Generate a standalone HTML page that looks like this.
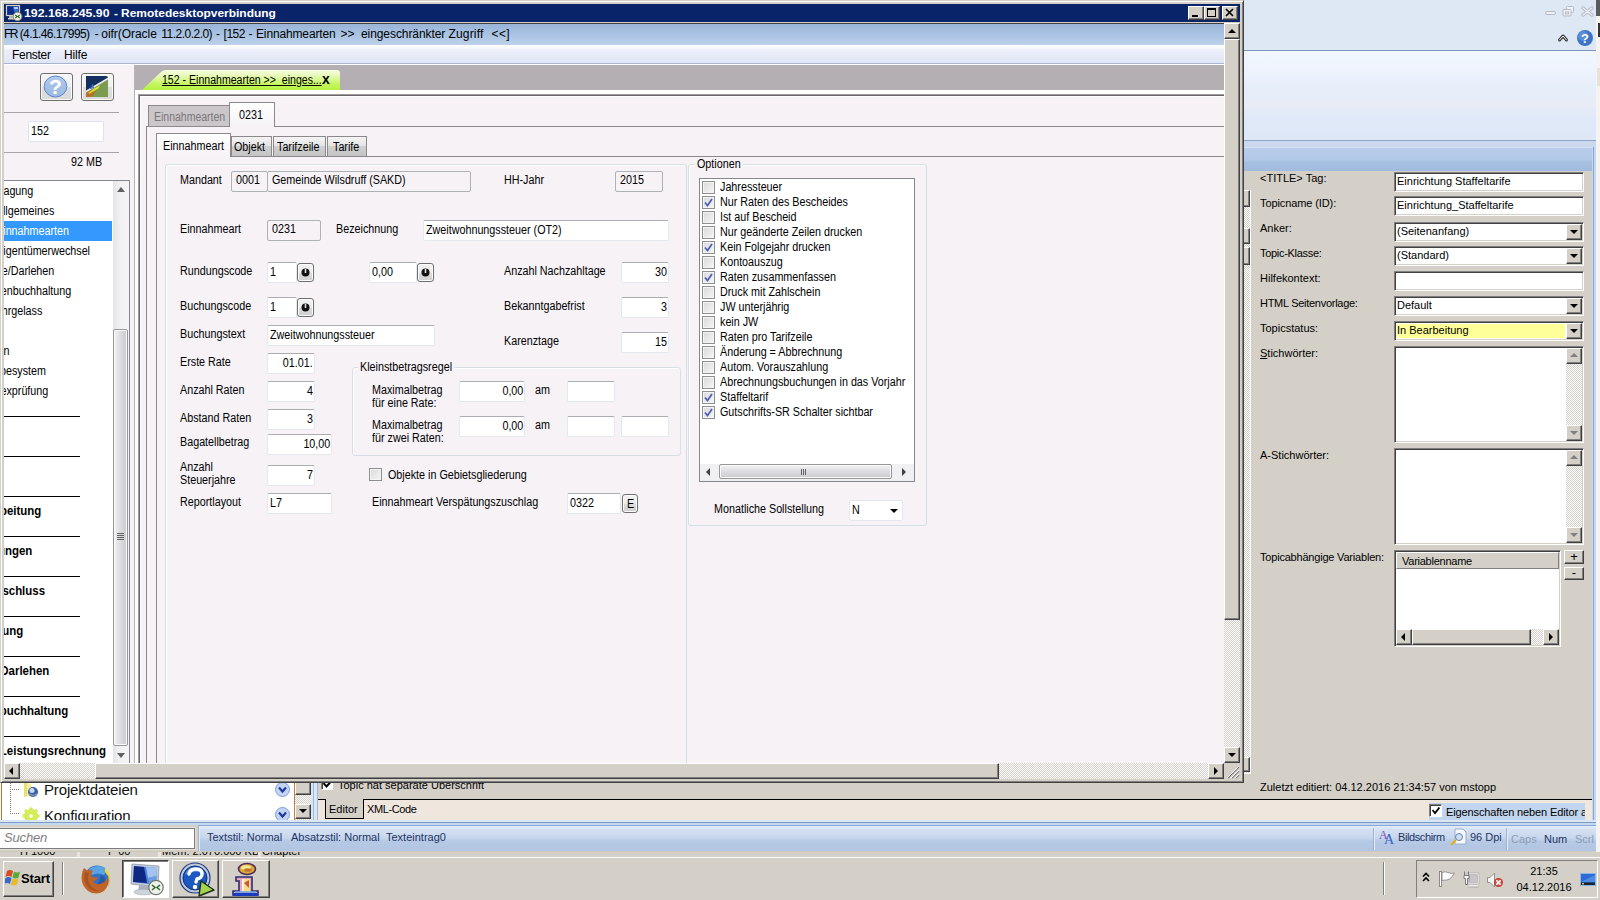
<!DOCTYPE html>
<html><head><meta charset="utf-8">
<style>
*{box-sizing:border-box;margin:0;padding:0}
html,body{width:1600px;height:900px;overflow:hidden;background:#d4d0c8;font-family:"Liberation Sans",sans-serif;font-size:11px;color:#000}
.a{position:absolute}
.t{position:absolute;white-space:nowrap;line-height:14px;font-size:11px;letter-spacing:-0.15px}
.dith{background-color:#eae8e4;background-image:conic-gradient(#fff 25%,#d4d0c8 0 50%,#fff 0 75%,#d4d0c8 0);background-size:2px 2px}
.b3{position:absolute;background:#d4d0c8;border:1px solid;border-color:#fff #404040 #404040 #fff;box-shadow:inset -1px -1px 0 #808080}
.sunk{position:absolute;background:#fff;border:1px solid;border-color:#808080 #fff #fff #808080;box-shadow:inset 1px 1px 0 #404040,inset -1px -1px 0 #d4d0c8}
.inp{position:absolute;background:#fff;border:1px solid #e3e9ef;border-top-color:#abadb3;border-radius:2px;height:21px;font-size:11px;line-height:19px;padding:0 1px 0 2px;white-space:nowrap;overflow:hidden;letter-spacing:-0.15px}
.inpd{position:absolute;background:#f6f2f6;border:1px solid #adb2b5;height:21px;font-size:11px;line-height:16px;padding:0 4px;white-space:nowrap;border-radius:2px;overflow:hidden;letter-spacing:-0.15px}
.r{text-align:right}
.f{margin-top:1px;font-size:12.5px;line-height:13px;letter-spacing:0;transform:scaleX(.86);transform-origin:0 0}
.fr{transform-origin:100% 0}
.inp>span,.inpd>span{display:inline-block;font-size:12.5px;letter-spacing:0;transform:scaleX(.86);transform-origin:0 50%}
.inp.r>span{transform-origin:100% 50%}
.hl{position:absolute;height:1px}
.vl{position:absolute;width:1px}
.cb{position:absolute;width:13px;height:13px;border:1px solid #8e8f8f;background:linear-gradient(135deg,#d9d9d9,#f6f6f6);box-shadow:inset 0 0 0 1px #f4f4f4}
.hmt{position:absolute;white-space:nowrap;font-size:11px;line-height:14px}
</style></head><body>

<!-- HM background -->
<div class="a" style="left:1243px;top:0px;width:357px;height:853px;background:#dee8f5;"></div>
<div class="a" style="left:1243px;top:50px;width:353px;height:1px;background:#7f96ba;"></div>
<div class="a" style="left:1243px;top:51px;width:353px;height:89px;background:linear-gradient(#f1f7fe 0,#eef3fd 22%,#e6eefa 40%,#e7ebf6 62%,#dfe9f8 75%,#dde7f7 100%);"></div>
<div class="a" style="left:1243px;top:140px;width:353px;height:1px;background:#8fa6c8;"></div>
<div class="a" style="left:1243px;top:141px;width:353px;height:6px;background:#cbd9ee;"></div>
<div class="a" style="left:1596px;top:0px;width:4px;height:853px;background:#f4f3f1;"></div>
<div class="a" style="left:1596px;top:0px;width:4px;height:16px;background:#5a5a5a;"></div>
<div class="a" style="left:1598px;top:23px;width:2px;height:14px;background:#333;"></div>
<div class="a" style="left:1597px;top:68px;width:3px;height:18px;background:#e6e2da;"></div>
<svg class="a" style="left:1540px;top:0" width="60" height="50" viewBox="0 0 60 50">
<rect x="5.500" y="11.500" width="10" height="3" rx="1.500" fill="#eef2f8" stroke="#b4b9c4"/>
<rect x="26.500" y="6.500" width="7" height="6" rx="1" fill="#eef2f8" stroke="#b4b9c4"/>
<rect x="23" y="9.500" width="8" height="6.500" rx="1" fill="#eef2f8" stroke="#b4b9c4"/>
<rect x="25.500" y="12" width="3" height="2" fill="none" stroke="#b4b9c4"/>
<path d="M43 8 L52 15 M52 8 L43 15" stroke="#b4b9c4" stroke-width="3.400" stroke-linecap="round"/>
<path d="M43 8 L52 15 M52 8 L43 15" stroke="#eef2f8" stroke-width="1.400" stroke-linecap="round"/>
<path d="M19.500 40 L23 36 L26.500 40" fill="none" stroke="#333" stroke-width="3" stroke-linejoin="round" stroke-linecap="round"/>
<path d="M19.500 40 L23 36 L26.500 40" fill="none" stroke="#fff" stroke-width="1" stroke-linejoin="round" stroke-linecap="round"/>
<circle cx="45" cy="38" r="8" fill="#3f73c6"/>
<circle cx="43" cy="36" r="5" fill="#6b97d9" opacity=".7"/>
<text x="45" y="43" font-family="Liberation Sans" font-weight="bold" font-size="13" fill="#fff" text-anchor="middle">?</text>
</svg>
<div class="a" style="left:1244px;top:147px;width:349px;height:24px;background:linear-gradient(#b8cdea 0,#b1c8e7 50%,#a6c0e1 62%,#a0bbde 100%);border-top:1px solid #d5e2f3;border-right:1px solid #8ea9cf"></div>
<div class="a" style="left:1244px;top:171px;width:348px;height:628px;background:#d4d0c8;"></div>
<div class="a" style="left:1592px;top:147px;width:4px;height:706px;background:#c6d8ef;"></div>
<div class="a" style="left:1593px;top:147px;width:1px;height:680px;background:#88a6cf;"></div>
<div class="a dith" style="left:1244px;top:190px;width:6px;height:583px"></div>
<div class="a" style="left:1250px;top:190px;width:1px;height:584px;background:#fff;"></div>
<div class="a" style="left:1244px;top:773px;width:7px;height:1px;background:#fff;"></div>
<div class="a" style="left:1244px;top:190px;width:6px;height:17px;background:#d4d0c8;border:1px solid;border-color:#fff #404040 #404040 #d4d0c8;border-left:none;box-shadow:inset -1px -1px 0 #808080"></div>
<div class="a" style="left:1244px;top:228px;width:6px;height:16px;background:#d4d0c8;border:1px solid;border-color:#fff #404040 #404040 #d4d0c8;border-left:none;box-shadow:inset -1px -1px 0 #808080"></div>
<div class="a" style="left:1244px;top:247px;width:6px;height:18px;background:#d4d0c8;border:1px solid;border-color:#fff #404040 #404040 #d4d0c8;border-left:none;box-shadow:inset -1px -1px 0 #808080"></div>
<div class="a" style="left:1244px;top:757px;width:6px;height:15px;background:#d4d0c8;border:1px solid;border-color:#fff #404040 #404040 #d4d0c8;border-left:none;box-shadow:inset -1px -1px 0 #808080"></div>
<div class="hmt" style="left:1260px;top:171px;">&lt;TITLE&gt; Tag:</div>
<div class="hmt" style="left:1260px;top:196px;"><span style="letter-spacing:-0.1px">Topicname (ID):</span></div>
<div class="hmt" style="left:1260px;top:221px;">Anker:</div>
<div class="hmt" style="left:1260px;top:246px;"><span style="letter-spacing:-0.3px">Topic-Klasse:</span></div>
<div class="hmt" style="left:1260px;top:271px;">Hilfekontext:</div>
<div class="hmt" style="left:1260px;top:296px;"><span style="letter-spacing:-0.28px">HTML Seitenvorlage:</span></div>
<div class="hmt" style="left:1260px;top:321px;">Topicstatus:</div>
<div class="hmt" style="left:1260px;top:346px;"><u>S</u>tichwörter:</div>
<div class="hmt" style="left:1260px;top:448px;">A-Stichwörter:</div>
<div class="hmt" style="left:1260px;top:550px;"><span style="letter-spacing:-0.2px">Topicabhängige Variablen:</span></div>
<div class="sunk" style="left:1394px;top:172px;width:190px;height:20px;"></div>
<div class="hmt" style="left:1397px;top:174px;">Einrichtung Staffeltarife</div>
<div class="sunk" style="left:1394px;top:196px;width:190px;height:20px;"></div>
<div class="hmt" style="left:1397px;top:198px;">Einrichtung_Staffeltarife</div>
<div class="sunk" style="left:1394px;top:222px;width:190px;height:20px;"></div>
<div class="hmt" style="left:1397px;top:224px;">(Seitenanfang)</div>
<div class="b3" style="left:1566px;top:224px;width:16px;height:16px"></div>
<div class="a" style="left:1570px;top:230px;border:4px solid transparent;border-top-color:#000;border-bottom:none;width:0;height:0"></div>
<div class="sunk" style="left:1394px;top:246px;width:190px;height:20px;"></div>
<div class="hmt" style="left:1397px;top:248px;">(Standard)</div>
<div class="b3" style="left:1566px;top:248px;width:16px;height:16px"></div>
<div class="a" style="left:1570px;top:254px;border:4px solid transparent;border-top-color:#000;border-bottom:none;width:0;height:0"></div>
<div class="sunk" style="left:1394px;top:271px;width:190px;height:20px;"></div>
<div class="sunk" style="left:1394px;top:296px;width:190px;height:20px;"></div>
<div class="hmt" style="left:1397px;top:298px;">Default</div>
<div class="b3" style="left:1566px;top:298px;width:16px;height:16px"></div>
<div class="a" style="left:1570px;top:304px;border:4px solid transparent;border-top-color:#000;border-bottom:none;width:0;height:0"></div>
<div class="sunk" style="left:1394px;top:321px;width:190px;height:20px;"></div>
<div class="a" style="left:1397px;top:324px;width:168px;height:14px;background:#ffff99;"></div>
<div class="hmt" style="left:1397px;top:323px;">In Bearbeitung</div>
<div class="b3" style="left:1566px;top:323px;width:16px;height:16px"></div>
<div class="a" style="left:1570px;top:329px;border:4px solid transparent;border-top-color:#000;border-bottom:none;width:0;height:0"></div>
<div class="sunk" style="left:1394px;top:346px;width:190px;height:97px;"></div>
<div class="a dith" style="left:1566px;top:348px;width:16px;height:93px"></div>
<div class="b3" style="left:1566px;top:348px;width:16px;height:16px"></div>
<div class="a" style="left:1570px;top:353px;border:4px solid transparent;border-bottom-color:#808080;border-top:none;width:0;height:0"></div>
<div class="b3" style="left:1566px;top:425px;width:16px;height:16px"></div>
<div class="a" style="left:1570px;top:431px;border:4px solid transparent;border-top-color:#808080;border-bottom:none;width:0;height:0"></div>
<div class="sunk" style="left:1394px;top:448px;width:190px;height:97px;"></div>
<div class="a dith" style="left:1566px;top:450px;width:16px;height:93px"></div>
<div class="b3" style="left:1566px;top:450px;width:16px;height:16px"></div>
<div class="a" style="left:1570px;top:455px;border:4px solid transparent;border-bottom-color:#808080;border-top:none;width:0;height:0"></div>
<div class="b3" style="left:1566px;top:527px;width:16px;height:16px"></div>
<div class="a" style="left:1570px;top:533px;border:4px solid transparent;border-top-color:#808080;border-bottom:none;width:0;height:0"></div>
<div class="sunk" style="left:1394px;top:550px;width:167px;height:97px;"></div>
<div class="a" style="left:1396px;top:552px;width:163px;height:17px;background:#d4d0c8;border:1px solid;border-color:#fff #808080 #808080 #fff"></div>
<div class="hmt" style="left:1402px;top:554px;letter-spacing:-0.25px">Variablenname</div>
<div class="a dith" style="left:1396px;top:629px;width:163px;height:16px"></div>
<div class="b3" style="left:1396px;top:629px;width:16px;height:16px"></div>
<div class="a" style="left:1401px;top:633px;border:4px solid transparent;border-right-color:#000;border-left:none;width:0;height:0"></div>
<div class="b3" style="left:1543px;top:629px;width:16px;height:16px"></div>
<div class="a" style="left:1549px;top:633px;border:4px solid transparent;border-left-color:#000;border-right:none;width:0;height:0"></div>
<div class="b3" style="left:1412px;top:629px;width:119px;height:16px"></div>
<div class="b3" style="left:1564px;top:550px;width:20px;height:14px;text-align:center;line-height:11px;font-size:13px">+</div>
<div class="b3" style="left:1564px;top:567px;width:20px;height:13px;text-align:center;line-height:9px;font-size:13px">-</div>
<div class="hmt" style="left:1260px;top:780px;">Zuletzt editiert: 04.12.2016 21:34:57 von mstopp</div>
<!-- RDP window frame -->
<div class="a" style="left:0px;top:0px;width:1244px;height:783px;background:#d4d0c8;border:1px solid;border-color:#d4d0c8 #404040 #404040 #d4d0c8;box-shadow:inset 1px 1px 0 #fff,inset -1px -1px 0 #808080"></div>
<div class="a" style="left:4px;top:4px;width:1236px;height:18px;background:#0a246a;"></div>
<svg class="a" style="left:5px;top:4px" width="18" height="18" viewBox="0 0 18 18">
<rect x="1.500" y="1.500" width="13" height="10" fill="#0c2c8c" stroke="#d4d0c0" stroke-width="1.200"/>
<path d="M7.500 2.500 h6 v5 l-4 1z" fill="#3c6cd0"/><path d="M9 3 h4 v2 h-4z" fill="#a8c8f8"/>
<rect x="4" y="12" width="5" height="2" fill="#b8b4a8"/><rect x="3" y="14" width="8" height="1.500" fill="#dcd8cc"/>
<circle cx="12.500" cy="12.500" r="4.300" fill="#f0f0e8" stroke="#8c8878" stroke-width="1"/>
<path d="M10.300 10.800 l1.700 1.700 l-1.700 1.700 M14.700 10.800 l-1.700 1.700 l1.700 1.700" stroke="#186018" stroke-width="1.100" fill="none"/>
</svg>
<div class="t" style="left:24.4px;top:6px;font-size:11px;letter-spacing:0;transform:scaleX(1.1183);transform-origin:0 0;font-weight:bold;color:#fff;line-height:15px">192.168.245.90</div>
<div class="t" style="left:114.2px;top:6px;font-size:11px;letter-spacing:0;transform:scaleX(1.0648);transform-origin:0 0;font-weight:bold;color:#fff;line-height:15px">-</div>
<div class="t" style="left:121px;top:6px;font-size:11px;letter-spacing:0;transform:scaleX(1.0878);transform-origin:0 0;font-weight:bold;color:#fff;line-height:15px">Remotedesktopverbindung</div>
<div class="b3" style="left:1188px;top:6px;width:16px;height:14px"></div>
<div class="b3" style="left:1204px;top:6px;width:16px;height:14px"></div>
<div class="b3" style="left:1222px;top:6px;width:16px;height:14px"></div>
<div class="a" style="left:1192px;top:15px;width:6px;height:2px;background:#000;"></div>
<div class="a" style="left:1207px;top:8px;width:9px;height:9px;border:1px solid #000;border-top-width:2px"></div>
<svg class="a" style="left:1225px;top:8px" width="10" height="9" viewBox="0 0 10 9"><path d="M1 1 L8 8 M8 1 L1 8" stroke="#000" stroke-width="1.600"/></svg>
<div class="a" id="client" style="left:4px;top:23px;width:1220px;height:740px;overflow:hidden;background:#f6f2f6">
<div class="a" style="left:0px;top:0px;width:1220px;height:1px;background:#404040;"></div>
<div class="a" style="left:0px;top:1px;width:1220px;height:21px;background:linear-gradient(#98b4d8,#a9c3e3 50%,#bdd1ea);"></div>
<div class="a" style="left:0px;top:22px;width:1220px;height:4px;background:linear-gradient(#fff,#f4f6fc);"></div>
<div class="a" style="left:0px;top:26px;width:1220px;height:15px;background:linear-gradient(#eef0fa,#dfe5f5);"></div>
<div class="a" style="left:0px;top:40px;width:1220px;height:1px;background:#a9b5d0;"></div>
<div class="a" style="left:0px;top:41px;width:1220px;height:1px;background:#fff;"></div>
<div class="t" style="left:0px;top:4px;font-size:12px;letter-spacing:-1.548px;">FR</div>
<div class="t" style="left:15.7px;top:4px;font-size:12px;letter-spacing:-0.590px;">(4.1.46.17995)</div>
<div class="t" style="left:90.7px;top:4px;font-size:12px;letter-spacing:-0.197px;">-</div>
<div class="t" style="left:97.3px;top:4px;font-size:12px;letter-spacing:-0.046px;">oifr(Oracle</div>
<div class="t" style="left:157.3px;top:4px;font-size:12px;letter-spacing:-0.517px;">11.2.0.2.0)</div>
<div class="t" style="left:212px;top:4px;font-size:12px;letter-spacing:0.003px;">-</div>
<div class="t" style="left:219.6px;top:4px;font-size:12px;letter-spacing:-0.489px;">[152</div>
<div class="t" style="left:244.5px;top:4px;font-size:12px;letter-spacing:0.503px;">-</div>
<div class="t" style="left:252px;top:4px;font-size:12px;letter-spacing:-0.145px;">Einnahmearten</div>
<div class="t" style="left:336.5px;top:4px;font-size:12px;letter-spacing:-0.008px;">&gt;&gt;</div>
<div class="t" style="left:357px;top:4px;font-size:12px;letter-spacing:-0.079px;">eingeschränkter</div>
<div class="t" style="left:444.4px;top:4px;font-size:12px;letter-spacing:0.187px;">Zugriff</div>
<div class="t" style="left:487.6px;top:4px;font-size:12px;letter-spacing:0.317px;">&lt;&lt;]</div>
<div class="t" style="left:8px;top:25px;font-size:12px;letter-spacing:-0.3px">Fenster</div>
<div class="t" style="left:60px;top:25px;font-size:12px">Hilfe</div>
<div class="a" style="left:130px;top:42px;width:1px;height:700px;background:#b8b4b8;"></div>
<div class="a" style="left:36px;top:50px;width:33px;height:28px;background:linear-gradient(#f6f6f6,#efefef 48%,#dedede 50%,#dadada);border:1px solid #70706a;border-radius:3px;box-shadow:inset 0 0 0 1px #fbfbfb"></div>
<div class="a" style="left:77px;top:50px;width:33px;height:28px;background:linear-gradient(#f6f6f6,#efefef 48%,#dedede 50%,#dadada);border:1px solid #70706a;border-radius:3px;box-shadow:inset 0 0 0 1px #fbfbfb"></div>
<svg class="a" style="left:39px;top:52px" width="25" height="23" viewBox="0 0 25 23">
<defs><linearGradient id="qg" x1="0" y1="0" x2="0" y2="1"><stop offset="0" stop-color="#b4cdee"/><stop offset=".5" stop-color="#a4c0e6"/><stop offset="1" stop-color="#9cbae2"/></linearGradient></defs>
<ellipse cx="12.500" cy="11.500" rx="11.300" ry="10.500" fill="url(#qg)" stroke="#5f86d4" stroke-width="1"/>
<text x="12.500" y="19" font-family="Liberation Sans" font-weight="bold" font-size="21" fill="#fff" text-anchor="middle">?</text></svg>
<svg class="a" style="left:82px;top:53px" width="22" height="21" viewBox="0 0 22 21">
<path d="M0 0 L20 0 Q22 0 22 2 L22 21 L0 21Z" fill="#15305e"/>
<path d="M0 21 L0 15.500 L22 2.500 L22 21 Z" fill="#7b9a52"/>
<path d="M0 21 L0 16 L11 10 L12 13 L9 16 L6 21 Z" fill="#b87030"/>
<path d="M0 14.500 L22 1.500 L22 3.500 L0 16.500 Z" fill="#ece8ec"/>
<path d="M3 13.500 l2.500 -2.500 l0.500 -3 l1.500 1 l0.500 3 z" fill="#3f78d0"/>
<path d="M2 17 l3 -2 l3 -2.500 l3 -1.500 l3 -1.500 l-1 2.500 l-3 2 l-3 1.500 l-3 2 z" fill="#c0f030"/>
</svg>
<div class="a" style="left:0px;top:89px;width:115px;height:1px;background:#a8a4a8;"></div>
<div class="a" style="left:0px;top:129px;width:115px;height:1px;background:#a8a4a8;"></div>
<div class="inp" style="left:24px;top:98px;width:76px;border-color:#dde3ee;border-radius:2px"><span>152</span></div>
<div class="t f" style="left:67px;top:132px;">92 MB</div>
<div class="a" style="left:0px;top:157px;width:126px;height:585px;background:#fff;border-top:1px solid #828790;border-right:1px solid #828790"></div>
<div class="a" style="left:0px;top:198px;width:108px;height:20px;background:#3399ff;"></div>
<div class="t f fr" style="left:-200px;width:229.3px;text-align:right;top:161px;">agung</div>
<div class="t f fr" style="left:-200px;width:250.3px;text-align:right;top:181px;">llgemeines</div>
<div class="t f fr" style="left:-200px;width:265px;text-align:right;top:201px;color:#fff">innahmearten</div>
<div class="t f fr" style="left:-200px;width:286px;text-align:right;top:221px;">igentümerwechsel</div>
<div class="t f fr" style="left:-200px;width:250.3px;text-align:right;top:241px;">e/Darlehen</div>
<div class="t f fr" style="left:-200px;width:267.3px;text-align:right;top:261px;">enbuchhaltung</div>
<div class="t f fr" style="left:-200px;width:238.3px;text-align:right;top:281px;">hrgelass</div>
<div class="t f fr" style="left:-200px;width:205.5px;text-align:right;top:321px;">en</div>
<div class="t f fr" style="left:-200px;width:242px;text-align:right;top:341px;">besystem</div>
<div class="t f fr" style="left:-200px;width:244.3px;text-align:right;top:361px;">exprüfung</div>
<div class="a" style="left:0px;top:393px;width:76px;height:1px;background:#000;"></div>
<div class="a" style="left:0px;top:433px;width:76px;height:1px;background:#000;"></div>
<div class="a" style="left:0px;top:473px;width:76px;height:1px;background:#000;"></div>
<div class="a" style="left:0px;top:513px;width:76px;height:1px;background:#000;"></div>
<div class="a" style="left:0px;top:553px;width:76px;height:1px;background:#000;"></div>
<div class="a" style="left:0px;top:593px;width:76px;height:1px;background:#000;"></div>
<div class="a" style="left:0px;top:633px;width:76px;height:1px;background:#000;"></div>
<div class="a" style="left:0px;top:673px;width:76px;height:1px;background:#000;"></div>
<div class="a" style="left:0px;top:713px;width:76px;height:1px;background:#000;"></div>
<div class="t f fr" style="left:-200px;width:237.3px;text-align:right;top:481px;font-weight:bold;transform:scaleX(.915)">rbeitung</div>
<div class="t f fr" style="left:-200px;width:228.3px;text-align:right;top:521px;font-weight:bold;transform:scaleX(.915)">ungen</div>
<div class="t f fr" style="left:-200px;width:241px;text-align:right;top:561px;font-weight:bold;transform:scaleX(.915)">bschluss</div>
<div class="t f fr" style="left:-200px;width:219.3px;text-align:right;top:601px;font-weight:bold;transform:scaleX(.915)">nung</div>
<div class="t f fr" style="left:-200px;width:245.3px;text-align:right;top:641px;font-weight:bold;transform:scaleX(.915)">/Darlehen</div>
<div class="t f fr" style="left:-200px;width:264.3px;text-align:right;top:681px;font-weight:bold;transform:scaleX(.915)">nbuchhaltung</div>
<div class="t f fr" style="left:-200px;width:302px;text-align:right;top:721px;font-weight:bold;transform:scaleX(.915)">Leistungsrechnung</div>
<div class="a" style="left:109px;top:158px;width:16px;height:582px;background:linear-gradient(90deg,#e4e4e6,#f0eff1 40%,#f5f4f6);"></div>
<div class="a" style="left:113px;top:164px;border:4px solid transparent;border-bottom:5px solid #606060;border-top:none;width:0;height:0"></div>
<div class="a" style="left:109px;top:306px;width:15px;height:417px;background:linear-gradient(90deg,#f2f2f4,#dcdce0 50%,#c9c9cf);border:1px solid #979797;border-radius:2px;box-shadow:inset 0 0 0 1px #fafafa"></div>
<div class="a" style="left:113px;top:510px;width:7px;height:1px;background:#606060;"></div>
<div class="a" style="left:113px;top:512px;width:7px;height:1px;background:#606060;"></div>
<div class="a" style="left:113px;top:514px;width:7px;height:1px;background:#606060;"></div>
<div class="a" style="left:113px;top:516px;width:7px;height:1px;background:#606060;"></div>
<div class="a" style="left:113px;top:730px;border:4px solid transparent;border-top:5px solid #606060;border-bottom:none;width:0;height:0"></div>
<div class="a" style="left:131px;top:42px;width:1089px;height:25px;background:#b3afb3;"></div>
<div class="a" style="left:131px;top:67px;width:1089px;height:4px;background:#fff;"></div>
<div class="a" style="left:131px;top:67px;width:3px;height:675px;background:#fff;"></div>
<div class="a" style="left:134px;top:71px;width:1086px;height:1px;background:#a09ca0;"></div>
<div class="a" style="left:135px;top:72px;width:1085px;height:1px;background:#6a666a;"></div>
<div class="a" style="left:136px;top:73px;width:1084px;height:1px;background:#fff;"></div>
<div class="a" style="left:134px;top:71px;width:1px;height:670px;background:#a09ca0;"></div>
<div class="a" style="left:135px;top:72px;width:1px;height:670px;background:#6a666a;"></div>
<div class="a" style="left:136px;top:73px;width:1px;height:670px;background:#fff;"></div>
<svg class="a" style="left:134px;top:46px" width="206" height="21" viewBox="0 0 206 21">
<defs><linearGradient id="gg" x1="0" y1="0" x2="0" y2="1"><stop offset="0" stop-color="#f8fde4"/><stop offset=".3" stop-color="#e6f9b4"/><stop offset=".7" stop-color="#c6f662"/><stop offset="1" stop-color="#b6f23e"/></linearGradient></defs>
<path d="M4 21 L23 3 Q25 1 28 1 L199 1 Q202 1 202 4 L202 21 Z" fill="url(#gg)"/>
</svg>
<div class="t f" style="left:158px;top:50px;text-decoration:underline;transform:scaleX(.845)">152 - Einnahmearten &gt;&gt;&nbsp; einges...</div>
<div class="t" style="left:318px;top:49px;font-weight:bold;font-size:14px;line-height:14px">x</div>
<div class="a" style="left:142px;top:103px;width:1078px;height:1px;background:#8c888c;"></div>
<div class="a" style="left:142px;top:103px;width:1px;height:640px;background:#8c888c;"></div>
<div class="a" style="left:144px;top:82px;width:82px;height:21px;background:#cac6ca;border:1px solid #8c888c;border-bottom:none"></div>
<div class="t f" style="left:150px;top:87px;color:#7a767a;transform:scaleX(.84)">Einnahmearten</div>
<div class="a" style="left:225px;top:79px;width:46px;height:25px;background:#fbf9fb;border:1px solid #8c888c;border-bottom:none;background:linear-gradient(#fff,#f6f2f6)"></div>
<div class="t f" style="left:235px;top:85px;">0231</div>
<div class="a" style="left:152px;top:133px;width:1068px;height:1px;background:#8c888c;"></div>
<div class="a" style="left:152px;top:133px;width:1px;height:610px;background:#8c888c;"></div>
<div class="a" style="left:227px;top:113px;width:41px;height:20px;background:linear-gradient(#f4f4f4,#e4e4e4 45%,#cfcfcf 50%,#c4c4c4);border:1px solid #8c888c;border-bottom:none"></div>
<div class="t f" style="left:230px;top:117px;">Objekt</div>
<div class="a" style="left:269px;top:113px;width:53px;height:20px;background:linear-gradient(#f4f4f4,#e4e4e4 45%,#cfcfcf 50%,#c4c4c4);border:1px solid #8c888c;border-bottom:none"></div>
<div class="t f" style="left:273px;top:117px;">Tarifzeile</div>
<div class="a" style="left:323px;top:113px;width:40px;height:20px;background:linear-gradient(#f4f4f4,#e4e4e4 45%,#cfcfcf 50%,#c4c4c4);border:1px solid #8c888c;border-bottom:none"></div>
<div class="t f" style="left:329px;top:117px;">Tarife</div>
<div class="a" style="left:152px;top:110px;width:75px;height:24px;background:linear-gradient(#fff,#f6f2f6);border:1px solid #8c888c;border-bottom:none"></div>
<div class="t f" style="left:159px;top:116px;">Einnahmeart</div>
<div class="a" style="left:161px;top:141px;width:522px;height:640px;background:transparent;border:1px solid #d5dfe5;border-radius:3px;box-shadow:inset 1px 1px 0 #fff"></div>
<div class="a" style="left:684px;top:141px;width:239px;height:362px;background:transparent;border:1px solid #d5dfe5;border-radius:3px;box-shadow:inset 1px 1px 0 #fff"></div>
<div class="a" style="left:691px;top:140px;width:48px;height:3px;background:#f6f2f6"></div><div class="t f" style="left:693px;top:134px">Optionen</div>
<div class="a" style="left:348px;top:344px;width:329px;height:89px;background:transparent;border:1px solid #d5dfe5;border-radius:3px;box-shadow:inset 1px 1px 0 #fff"></div>
<div class="a" style="left:354px;top:343px;width:96px;height:3px;background:#f6f2f6"></div><div class="t f" style="left:356px;top:337px">Kleinstbetragsregel</div>
<div class="t f" style="left:176px;top:150px;">Mandant</div>
<div class="inpd" style="left:227px;top:148px;width:37px"><span>0001</span></div>
<div class="inpd" style="left:263px;top:148px;width:204px"><span>Gemeinde Wilsdruff (SAKD)</span></div>
<div class="t f" style="left:500px;top:150px;">HH-Jahr</div>
<div class="inpd" style="left:611px;top:148px;width:48px"><span>2015</span></div>
<div class="t f" style="left:176px;top:199px;">Einnahmeart</div>
<div class="inpd" style="left:263px;top:197px;width:54px"><span>0231</span></div>
<div class="t f" style="left:332px;top:199px;">Bezeichnung</div>
<div class="inp" style="left:419px;top:197px;width:246px"><span>Zweitwohnungssteuer (OT2)</span></div>
<div class="t f" style="left:176px;top:241px;">Rundungscode</div>
<div class="inp" style="left:263px;top:239px;width:30px"><span>1</span></div>
<div class="a" style="left:293px;top:240px;width:17px;height:19px;background:linear-gradient(#f2f2f2,#ebebeb 50%,#dddddd 51%,#cfcfcf);border:1px solid #707070;border-radius:3px;box-shadow:inset 0 0 0 1px #fcfcfc"></div>
<svg class="a" style="left:297px;top:245px" width="9" height="9" viewBox="0 0 9 9"><circle cx="4.500" cy="4.500" r="4" fill="#111"/><rect x="3.700" y="1" width="1.600" height="4" fill="#ddd"/></svg>
<div class="inp" style="left:365px;top:239px;width:48px"><span>0,00</span></div>
<div class="a" style="left:413px;top:240px;width:17px;height:19px;background:linear-gradient(#f2f2f2,#ebebeb 50%,#dddddd 51%,#cfcfcf);border:1px solid #707070;border-radius:3px;box-shadow:inset 0 0 0 1px #fcfcfc"></div>
<svg class="a" style="left:417px;top:245px" width="9" height="9" viewBox="0 0 9 9"><circle cx="4.500" cy="4.500" r="4" fill="#111"/><rect x="3.700" y="1" width="1.600" height="4" fill="#ddd"/></svg>
<div class="t f" style="left:500px;top:241px;">Anzahl Nachzahltage</div>
<div class="inp r" style="left:617px;top:239px;width:48px"><span>30</span></div>
<div class="t f" style="left:176px;top:276px;">Buchungscode</div>
<div class="inp" style="left:263px;top:274px;width:30px"><span>1</span></div>
<div class="a" style="left:293px;top:275px;width:17px;height:19px;background:linear-gradient(#f2f2f2,#ebebeb 50%,#dddddd 51%,#cfcfcf);border:1px solid #707070;border-radius:3px;box-shadow:inset 0 0 0 1px #fcfcfc"></div>
<svg class="a" style="left:297px;top:280px" width="9" height="9" viewBox="0 0 9 9"><circle cx="4.500" cy="4.500" r="4" fill="#111"/><rect x="3.700" y="1" width="1.600" height="4" fill="#ddd"/></svg>
<div class="t f" style="left:500px;top:276px;">Bekanntgabefrist</div>
<div class="inp r" style="left:617px;top:274px;width:48px"><span>3</span></div>
<div class="t f" style="left:176px;top:304px;">Buchungstext</div>
<div class="inp" style="left:263px;top:302px;width:168px"><span>Zweitwohnungssteuer</span></div>
<div class="t f" style="left:500px;top:311px;">Karenztage</div>
<div class="inp r" style="left:617px;top:309px;width:48px"><span>15</span></div>
<div class="t f" style="left:176px;top:332px;">Erste Rate</div>
<div class="inp r" style="left:263px;top:330px;width:48px"><span>01.01.</span></div>
<div class="t f" style="left:176px;top:360px;">Anzahl Raten</div>
<div class="inp r" style="left:263px;top:358px;width:48px"><span>4</span></div>
<div class="t f" style="left:176px;top:388px;">Abstand Raten</div>
<div class="inp r" style="left:263px;top:386px;width:48px"><span>3</span></div>
<div class="t f" style="left:176px;top:412px;">Bagatellbetrag</div>
<div class="inp r" style="left:263px;top:411px;width:65px"><span>10,00</span></div>
<div class="t f" style="left:176px;top:437px;">Anzahl</div>
<div class="t f" style="left:176px;top:450px;">Steuerjahre</div>
<div class="inp r" style="left:263px;top:442px;width:48px"><span>7</span></div>
<div class="t f" style="left:176px;top:472px;">Reportlayout</div>
<div class="inp" style="left:263px;top:470px;width:65px"><span>L7</span></div>
<div class="t f" style="left:368px;top:360px;">Maximalbetrag</div>
<div class="t f" style="left:368px;top:373px;">für eine Rate:</div>
<div class="inp r" style="left:455px;top:358px;width:66px"><span>0,00</span></div>
<div class="t f" style="left:531px;top:360px;">am</div>
<div class="inp" style="left:563px;top:358px;width:48px"><span></span></div>
<div class="t f" style="left:368px;top:395px;">Maximalbetrag</div>
<div class="t f" style="left:368px;top:408px;">für zwei Raten:</div>
<div class="inp r" style="left:455px;top:393px;width:66px"><span>0,00</span></div>
<div class="t f" style="left:531px;top:395px;">am</div>
<div class="inp" style="left:563px;top:393px;width:48px"><span></span></div>
<div class="inp" style="left:617px;top:393px;width:48px"><span></span></div>
<div class="cb" style="left:365px;top:445px"></div>
<div class="t f" style="left:384px;top:445px;">Objekte in Gebietsgliederung</div>
<div class="t f" style="left:368px;top:472px;">Einnahmeart Verspätungszuschlag</div>
<div class="inp" style="left:563px;top:470px;width:54px"><span>0322</span></div>
<div class="a" style="left:618px;top:471px;width:16px;height:19px;background:linear-gradient(#f2f2f2,#ebebeb 50%,#dddddd 51%,#cfcfcf);border:1px solid #707070;border-radius:3px;box-shadow:inset 0 0 0 1px #fcfcfc"></div>
<div class="t f" style="left:623px;top:474px;">E</div>
<div class="a" style="left:695px;top:155px;width:216px;height:304px;background:#fff;border:1px solid #828790"></div>
<div class="cb" style="left:698px;top:158px"></div>
<div class="t f" style="left:716px;top:157px;">Jahressteuer</div>
<div class="cb" style="left:698px;top:173px"></div>
<svg class="a" style="left:700px;top:175px" width="9" height="9" viewBox="0 0 9 9"><path d="M1 4.500 L3.500 7.500 L8 1" stroke="#4a5fb4" stroke-width="1.700" fill="none"/></svg>
<div class="t f" style="left:716px;top:172px;">Nur Raten des Bescheides</div>
<div class="cb" style="left:698px;top:188px"></div>
<div class="t f" style="left:716px;top:187px;">Ist auf Bescheid</div>
<div class="cb" style="left:698px;top:203px"></div>
<div class="t f" style="left:716px;top:202px;">Nur geänderte Zeilen drucken</div>
<div class="cb" style="left:698px;top:218px"></div>
<svg class="a" style="left:700px;top:220px" width="9" height="9" viewBox="0 0 9 9"><path d="M1 4.500 L3.500 7.500 L8 1" stroke="#4a5fb4" stroke-width="1.700" fill="none"/></svg>
<div class="t f" style="left:716px;top:217px;">Kein Folgejahr drucken</div>
<div class="cb" style="left:698px;top:233px"></div>
<div class="t f" style="left:716px;top:232px;">Kontoauszug</div>
<div class="cb" style="left:698px;top:248px"></div>
<svg class="a" style="left:700px;top:250px" width="9" height="9" viewBox="0 0 9 9"><path d="M1 4.500 L3.500 7.500 L8 1" stroke="#4a5fb4" stroke-width="1.700" fill="none"/></svg>
<div class="t f" style="left:716px;top:247px;">Raten zusammenfassen</div>
<div class="cb" style="left:698px;top:263px"></div>
<div class="t f" style="left:716px;top:262px;">Druck mit Zahlschein</div>
<div class="cb" style="left:698px;top:278px"></div>
<div class="t f" style="left:716px;top:277px;">JW unterjährig</div>
<div class="cb" style="left:698px;top:293px"></div>
<div class="t f" style="left:716px;top:292px;">kein JW</div>
<div class="cb" style="left:698px;top:308px"></div>
<div class="t f" style="left:716px;top:307px;">Raten pro Tarifzeile</div>
<div class="cb" style="left:698px;top:323px"></div>
<div class="t f" style="left:716px;top:322px;">Änderung = Abbrechnung</div>
<div class="cb" style="left:698px;top:338px"></div>
<div class="t f" style="left:716px;top:337px;">Autom. Vorauszahlung</div>
<div class="cb" style="left:698px;top:353px"></div>
<div class="t f" style="left:716px;top:352px;">Abrechnungsbuchungen in das Vorjahr</div>
<div class="cb" style="left:698px;top:368px"></div>
<svg class="a" style="left:700px;top:370px" width="9" height="9" viewBox="0 0 9 9"><path d="M1 4.500 L3.500 7.500 L8 1" stroke="#4a5fb4" stroke-width="1.700" fill="none"/></svg>
<div class="t f" style="left:716px;top:367px;">Staffeltarif</div>
<div class="cb" style="left:698px;top:383px"></div>
<svg class="a" style="left:700px;top:385px" width="9" height="9" viewBox="0 0 9 9"><path d="M1 4.500 L3.500 7.500 L8 1" stroke="#4a5fb4" stroke-width="1.700" fill="none"/></svg>
<div class="t f" style="left:716px;top:382px;">Gutschrifts-SR Schalter sichtbar</div>
<div class="a" style="left:696px;top:441px;width:214px;height:17px;background:#f0eff1;"></div>
<div class="a" style="left:702px;top:445px;border:4px solid transparent;border-right:4px solid #404040;border-left:none;width:0;height:0"></div>
<div class="a" style="left:898px;top:445px;border:4px solid transparent;border-left:4px solid #404040;border-right:none;width:0;height:0"></div>
<div class="a" style="left:715px;top:441px;width:173px;height:15px;background:linear-gradient(#f2f2f4,#dcdce0 50%,#c9c9cf);border:1px solid #979797;border-radius:2px;box-shadow:inset 0 0 0 1px #fafafa"></div>
<div class="a" style="left:797px;top:446px;width:1px;height:6px;background:#606060;"></div>
<div class="a" style="left:799px;top:446px;width:1px;height:6px;background:#606060;"></div>
<div class="a" style="left:801px;top:446px;width:1px;height:6px;background:#606060;"></div>
<div class="t f" style="left:710px;top:479px;">Monatliche Sollstellung</div>
<div class="inp" style="border-top-color:#e3e9ef;left:845px;top:477px;width:54px"><span>N</span></div>
<div class="a" style="left:886px;top:486px;border:4px solid transparent;border-top:4px solid #000;border-bottom:none;width:0;height:0"></div>
</div>
<div class="a dith" style="left:1224px;top:23px;width:16px;height:740px"></div>
<div class="b3" style="left:1224px;top:23px;width:16px;height:16px"></div>
<div class="a" style="left:1228px;top:29px;border:4px solid transparent;border-bottom-color:#000;border-top:none;width:0;height:0"></div>
<div class="b3" style="left:1224px;top:39px;width:16px;height:581px"></div>
<div class="b3" style="left:1224px;top:747px;width:16px;height:16px"></div>
<div class="a" style="left:1228px;top:753px;border:4px solid transparent;border-top-color:#000;border-bottom:none;width:0;height:0"></div>
<div class="a dith" style="left:4px;top:763px;width:1220px;height:16px"></div>
<div class="b3" style="left:4px;top:763px;width:16px;height:16px"></div>
<div class="a" style="left:9px;top:767px;border:4px solid transparent;border-right-color:#000;border-left:none;width:0;height:0"></div>
<div class="b3" style="left:95px;top:763px;width:904px;height:16px"></div>
<div class="b3" style="left:1208px;top:763px;width:16px;height:16px"></div>
<div class="a" style="left:1214px;top:767px;border:4px solid transparent;border-left-color:#000;border-right:none;width:0;height:0"></div>
<div class="a" style="left:1224px;top:763px;width:16px;height:16px;background:#d4d0c8;"></div>
<svg class="a" style="left:1226px;top:765px" width="14" height="14" viewBox="0 0 14 14"><path d="M13 2 L2 13 M13 6 L6 13 M13 10 L10 13" stroke="#808080" stroke-width="1.200"/><path d="M13 1 L1 13 M13 5 L5 13 M13 9 L9 13" stroke="#fff" stroke-width="1"/></svg>
<!-- bottom strips -->
<div class="a" style="left:0px;top:783px;width:312px;height:37px;background:#fff;"></div>
<div class="a" style="left:1px;top:783px;width:1px;height:37px;background:#c07030;"></div>
<div class="a" style="left:294px;top:783px;width:1px;height:37px;background:#c88040;"></div>
<div class="a dith" style="left:295px;top:783px;width:16px;height:37px"></div>
<div class="b3" style="left:295px;top:783px;width:16px;height:12px;border-top:none"></div>
<div class="b3" style="left:295px;top:804px;width:16px;height:15px"></div>
<div class="a" style="left:299px;top:809px;border:4px solid transparent;border-top-color:#000;border-bottom:none;width:0;height:0"></div>
<div class="a" style="left:10px;top:783px;width:1px;height:31px;background:transparent;border-left:1px dotted #808080"></div>
<div class="a" style="left:10px;top:789px;width:9px;height:1px;background:transparent;border-top:1px dotted #808080"></div>
<div class="a" style="left:10px;top:813px;width:9px;height:1px;background:transparent;border-top:1px dotted #808080"></div>
<div class="a" style="left:0;top:783px;width:293px;height:37px;overflow:hidden;margin-top:0"><div class="t" style="left:44px;top:-2px;font-size:15px;line-height:18px;color:#111">Projektdateien</div><div class="t" style="left:44px;top:24px;font-size:15px;line-height:18px;color:#111">Konfiguration</div><svg class="a" style="left:22px;top:-1px" width="18" height="38" viewBox="0 0 18 38"><path d="M2 1 L6 0 L6 14 L2 15 Z" fill="#e8e070"/><path d="M5 1 L9 2 L9 15 L5 14Z" fill="#f4f0a0"/><circle cx="11" cy="10" r="5" fill="#3a5fa8"/><circle cx="10" cy="8.500" r="2.500" fill="#c8d8f0"/><path d="M7 12 q4 3 8 0" stroke="#9ab" fill="none"/><circle cx="9" cy="34" r="6.500" fill="#d4ee58" stroke="#b4cc40" stroke-width=".6"/><circle cx="9" cy="34" r="1.800" fill="#fff"/><g stroke="#d4ee58" stroke-width="3.200"><path d="M9 25.500v4M0.500 34h4M13.500 34h4M3 28l3 3M15 28l-3 3"/></g></svg><svg class="a" style="left:274px;top:-1px" width="17" height="38" viewBox="0 0 17 38"><circle cx="8.500" cy="7.500" r="7" fill="#c4d4f4" stroke="#7f9fdc"/><path d="M5 5.500 L8.500 9.500 L12 5.500" stroke="#1c3c9c" stroke-width="2.200" fill="none"/><circle cx="8.500" cy="32.500" r="7" fill="#c4d4f4" stroke="#7f9fdc"/><path d="M5 30.500 L8.500 34.500 L12 30.500" stroke="#1c3c9c" stroke-width="2.200" fill="none"/></svg></div>
<div class="a" style="left:311px;top:783px;width:7px;height:39px;background:#dbe6f4;"></div>
<div class="a" style="left:313px;top:783px;width:1px;height:39px;background:#9cb8dc;"></div>
<div class="a" style="left:317px;top:783px;width:1px;height:39px;background:#9cb8dc;"></div>
<div class="a" style="left:318px;top:783px;width:926px;height:17px;background:#d4d0c8;"></div>
<div class="a" style="left:321px;top:783px;width:12px;height:7px;background:#fff;border:1px solid #808080;border-top:none;border-right-color:#fff;border-bottom-color:#fff;box-shadow:inset 1px 0 0 #404040"></div>
<svg class="a" style="left:323px;top:783px" width="9" height="6" viewBox="0 0 9 6"><path d="M0.500 0 L3.500 3.500 L8.500 -2" stroke="#000" stroke-width="2" fill="none"/></svg>
<div class="a" style="left:338px;top:783px;width:200px;height:9px;overflow:hidden"><div class="hmt" style="left:0;top:-5px">Topic hat separate Überschrift</div></div>
<div class="a" style="left:318px;top:799px;width:1274px;height:1px;background:#000;"></div>
<div class="a" style="left:318px;top:800px;width:1274px;height:22px;background:#efe6dd;"></div>
<div class="a" style="left:325px;top:799px;width:39px;height:20px;background:#d4d0c8;border:1px solid #000;border-top:none"></div>
<div class="a" style="left:318px;top:799px;width:8px;height:1px;background:#000;"></div>
<div class="hmt" style="left:329px;top:802px;">Editor</div>
<div class="hmt" style="left:367px;top:802px;letter-spacing:-0.4px">XML-Code</div>
<div class="a" style="left:1429px;top:803px;width:156px;height:17px;background:#c2d5ef;"></div>
<div class="a" style="left:1429px;top:804px;width:13px;height:13px;background:#fff;border:1px solid #808080;border-right-color:#fff;border-bottom-color:#fff;box-shadow:inset 1px 1px 0 #404040"></div>
<svg class="a" style="left:1432px;top:807px" width="8" height="8" viewBox="0 0 8 8"><path d="M0.500 3 L3 6 L7.500 0.500" stroke="#000" stroke-width="1.800" fill="none"/></svg>
<div class="a" style="left:1446px;top:804px;width:139px;height:16px;overflow:hidden"><div class="hmt" style="left:0;top:1px;letter-spacing:-0.12px">Eigenschaften neben Editor anzeigen</div></div>
<div class="a" style="left:0px;top:820px;width:1596px;height:6px;background:#d8e6f6;"></div>
<div class="a" style="left:0px;top:822px;width:1596px;height:1px;background:#7f9cc4;"></div>
<div class="a" style="left:0px;top:823px;width:1596px;height:2px;background:#c4d8f0;"></div>
<div class="a" style="left:198px;top:825px;width:1398px;height:1px;background:#88a8d8;"></div>
<div class="a" style="left:0px;top:825px;width:198px;height:27px;background:#d4d0c8;"></div>
<div class="a" style="left:198px;top:826px;width:1398px;height:26px;background:linear-gradient(#e4ecf8 0,#d4e0f2 15%,#c8d7ee 45%,#b6c9e4 58%,#b0c5e2 100%);"></div>
<div class="a" style="left:198px;top:826px;width:1px;height:26px;background:#9cb4d8;"></div>
<div class="a" style="left:199px;top:826px;width:1px;height:26px;background:#e4ecf8;"></div>
<div class="a" style="left:0px;top:851px;width:1600px;height:2px;background:#cfc8bc;"></div>
<div class="a" style="left:-1px;top:828px;width:196px;height:21px;background:#fff;border:1px solid #7c7c7c;box-shadow:0 0 0 1px #e4e0d8"></div>
<div class="t" style="left:4px;top:831px;font-style:italic;color:#808080;font-size:13px">Suchen</div>
<div class="hmt" style="left:207px;top:830px;color:#1c3563">Textstil: Normal</div>
<div class="hmt" style="left:291px;top:830px;color:#1c3563">Absatzstil: Normal</div>
<div class="hmt" style="left:386px;top:830px;color:#1c3563">Texteintrag0</div>
<div class="a" style="left:1373px;top:828px;width:1px;height:22px;background:#9cb4d6;"></div>
<div class="a" style="left:1374px;top:828px;width:1px;height:22px;background:#e4ecf8;"></div>
<div class="a" style="left:1506px;top:828px;width:1px;height:22px;background:#9cb4d6;"></div>
<div class="a" style="left:1507px;top:828px;width:1px;height:22px;background:#e4ecf8;"></div>
<svg class="a" style="left:1379px;top:828px" width="18" height="18" viewBox="0 0 18 18">
<text x="0" y="11" font-family="Liberation Serif" font-size="12" fill="#7a4fb0">A</text>
<text x="5" y="16" font-family="Liberation Serif" font-size="14" fill="#3a62c0">A</text></svg>
<div class="hmt" style="left:1398px;top:830px;color:#1c3563;letter-spacing:-0.4px">Bildschirm</div>
<svg class="a" style="left:1450px;top:828px" width="18" height="18" viewBox="0 0 18 18">
<path d="M5 1 h8 l3 3 v12 h-11 z" fill="#f4f8fc" stroke="#9ab0cc"/>
<circle cx="9" cy="9" r="3.500" fill="#cfe0f4" stroke="#6a86b0"/><path d="M6 12 L1 17" stroke="#e0b020" stroke-width="2.200"/></svg>
<div class="hmt" style="left:1470px;top:830px;color:#1c3563">96 Dpi</div>
<div class="hmt" style="left:1511px;top:832px;color:#8d9db8">Caps</div>
<div class="hmt" style="left:1544px;top:832px;color:#1c3563">Num</div>
<div class="hmt" style="left:1575px;top:832px;color:#8d9db8">Scrl</div>
<div class="a" style="left:1596px;top:820px;width:4px;height:33px;background:#f4f3f1;"></div>
<div class="a" style="left:0;top:852px;width:1600px;height:5px;overflow:hidden;background:#d4d0c8"><div class="hmt" style="left:20px;top:-8px">H 1000</div><div class="hmt" style="left:108px;top:-8px">P 00</div><div class="hmt" style="left:162px;top:-8px">Mem: 2.070.000 KB</div><div class="hmt" style="left:262px;top:-8px">Chapter</div><div class="a" style="left:77px;top:0;width:3px;height:5px;background:#e8e6e0"></div><div class="a" style="left:158px;top:0;width:3px;height:5px;background:#e8e6e0"></div><div class="a" style="left:258px;top:0;width:3px;height:5px;background:#e8e6e0"></div></div>
<div class="a" style="left:0px;top:857px;width:1600px;height:43px;background:#d4d0c8;"></div>
<div class="a" style="left:0px;top:857px;width:1600px;height:1px;background:#fff;"></div>
<div class="b3" style="left:3px;top:861px;width:51px;height:36px"></div>
<svg class="a" style="left:5px;top:868px" width="18" height="18" viewBox="0 0 18 18">
<path d="M2 3 q3 -2 6 0 l-1.500 6 q-3 -2 -6 0 z" fill="#d84a28"/>
<path d="M9 3.500 q3 2 6 0 l-1.500 6 q-3 2 -6 0 z" fill="#5aa838"/>
<path d="M0.500 10 q3 -2 6 0 l-1.500 6 q-3 -2 -6 0 z" fill="#3a68c8"/>
<path d="M7.500 10.500 q3 2 6 0 l-1.500 6 q-3 2 -6 0 z" fill="#e8b828"/></svg>
<div class="t" style="left:21px;top:871px;font-weight:bold;font-size:13px;line-height:16px">Start</div>
<div class="a" style="left:62px;top:862px;width:1px;height:33px;background:#808080;"></div>
<div class="a" style="left:63px;top:862px;width:1px;height:33px;background:#fff;"></div>
<svg class="a" style="left:80px;top:863px" width="32" height="32" viewBox="0 0 32 32">
<circle cx="17" cy="15" r="12.500" fill="#3470c4"/>
<path d="M9 6 Q16 1 24 4 Q27 8 24 12 Q18 9 12 12Z" fill="#5aa4e4"/>
<path d="M21 12 q5 1 4 7 q-3 4 -8 3 q3 -4 4 -10z" fill="#2858a8"/>
<path d="M4 5 L8 8 Q11 6 13 8 Q10 11 12 14 Q16 15 18 14 Q17 18 13 18 Q15 22 20 21 Q25 20 27 15 Q30 22 24 28 Q16 33 8 28 Q0 21 2 11 Q2 8 4 5Z" fill="#c06428"/>
<path d="M5 9 Q3 16 7 23 Q12 29 19 28 Q12 26 9 20 Q7 14 9 10Z" fill="#a85420"/>
<path d="M25 5 Q31 10 30 18 Q28 12 25 9Z" fill="#ecd838"/><path d="M28 12 Q31 18 28 24 Q29 18 28 12Z" fill="#e8a028"/>
</svg>
<div class="a" style="left:122px;top:860px;width:47px;height:38px;background:#fff;border:1px solid;border-color:#404040 #fff #fff #404040;box-shadow:inset 1px 1px 0 #808080"></div>
<svg class="a" style="left:129px;top:862px" width="38" height="35" viewBox="0 0 38 35">
<path d="M3 2 L30 4 L29 25 L2 22Z" fill="#c4ccd8" stroke="#8c98a8" stroke-width=".8"/>
<path d="M5 4 L28 6 L27 23 L4 20Z" fill="#4c80d8"/>
<path d="M5 4 L15 5 L18 21 L4 20Z" fill="#0c2880"/><path d="M17 5 L28 6 L27.500 14 L19 16Z" fill="#a4c4f0"/>
<path d="M19 16 L27.500 14 L27 23 L20 22Z" fill="#6c9ce4"/>
<path d="M10 23 L21 24 L22 29 L9 29Z" fill="#a8b0bc"/><ellipse cx="15" cy="30" rx="10" ry="2.800" fill="#ccd4dc" stroke="#a0a8b4" stroke-width=".6"/>
<circle cx="27" cy="25.500" r="7.200" fill="#eef0ea" stroke="#70746c" stroke-width="1.200"/>
<path d="M23 23 l3 2.500 l-3 2.500 M31 23 l-3 2.500 l3 2.500" stroke="#2a6a2a" stroke-width="1.500" fill="none"/></svg>
<div class="b3" style="left:172px;top:860px;width:47px;height:38px"></div>
<svg class="a" style="left:178px;top:861px" width="38" height="37" viewBox="0 0 38 37">
<circle cx="17" cy="17" r="15" fill="#c0c8d8" stroke="#1c3c84" stroke-width="1.200"/>
<circle cx="17" cy="17" r="12" fill="#1c58c0" stroke="#103080" stroke-width="1"/>
<path d="M7 14 Q9 6 17 6 Q25 6 27 14 Q22 10 17 11 Q11 11 7 14Z" fill="#5c98ec" opacity=".8"/>
<path d="M11 13 q1 -5 7 -5 q6 0 6 5 q0 4 -5 5 l-1 3" stroke="#fff" stroke-width="3.400" fill="none" stroke-linecap="round"/>
<circle cx="17" cy="26" r="2.200" fill="#fff"/>
<path d="M23 20 L36 29 L21 35Z" fill="#a4d44c" stroke="#1c2c1c" stroke-width="1.400" stroke-linejoin="round"/>
</svg>
<div class="b3" style="left:222px;top:860px;width:48px;height:38px"></div>
<svg class="a" style="left:229px;top:861px" width="36" height="37" viewBox="0 0 36 37">
<ellipse cx="18" cy="8" rx="8.500" ry="5.500" fill="#e0a838" stroke="#4c2c5c" stroke-width="1.600"/>
<ellipse cx="17" cy="6.500" rx="5" ry="2.200" fill="#f4e890"/><ellipse cx="19" cy="9" rx="4" ry="1.800" fill="#c07830"/>
<path d="M7 16 h16 v14 h6 v4 h-25 v-4 h6 v-10 h-3z" fill="#eca8c0" stroke="#2c2c6c" stroke-width="1.600"/>
<path d="M13 18 h8 v13 h-8z" fill="#f4dc88"/><path d="M15 22 l5 -3 v8z" fill="#c85a3c"/>
<path d="M14 18 v12" stroke="#fff" stroke-width="1.500"/>
<path d="M4 33.500 h25" stroke="#1c3cc0" stroke-width="3"/><path d="M6 31 h21" stroke="#68a0e8" stroke-width="1.500"/>
</svg>
<div class="a" style="left:1383px;top:862px;width:1px;height:33px;background:#808080;"></div>
<div class="a" style="left:1384px;top:862px;width:1px;height:33px;background:#fff;"></div>
<div class="a" style="left:1416px;top:860px;width:182px;height:38px;border:1px solid;border-color:#808080 #fff #fff #808080"></div>
<svg class="a" style="left:1420px;top:868px" width="96" height="24" viewBox="0 0 96 24">
<path d="M3 8.500 l3 -3 l3 3 M3 13 l3 -3 l3 3" stroke="#000" stroke-width="1.600" fill="none"/>
<rect x="19.500" y="3.500" width="2" height="15" fill="#fff" stroke="#808080" stroke-width=".9"/>
<path d="M22 4.500 q3 -1.500 6 0 t6.500 0.500 l-2.500 3.500 q-2 3.500 -5 3.500 t-5 0.500z" fill="#fcfcfc" stroke="#8c8c8c" stroke-width=".9"/>
<rect x="47.500" y="5.500" width="11" height="10" fill="#b4b0b4" stroke="#f4f4f4" stroke-width="1.400"/>
<rect x="47" y="5" width="12" height="11" fill="none" stroke="#8c888c" stroke-width=".5"/>
<path d="M50 7 h7 v7 h-7z" fill="#c8c4c8"/><path d="M49 18 h9" stroke="#f0f0f0" stroke-width="1.600"/><path d="M48.500 19 h10" stroke="#8c888c" stroke-width=".6"/>
<path d="M44.500 3.500 v4 M48.500 3.500 v4 M44 7.500 h5 v3 h-1.500 v6 h-2 v-6 h-1.500z" fill="#fff" stroke="#707070" stroke-width=".9"/>
<path d="M67.500 9.500 h2.500 l4.500 -4.500 v14 l-4.500 -4.500 h-2.500z" fill="#f4f4f4" stroke="#8c8c8c" stroke-width=".9"/>
<circle cx="78.500" cy="14.500" r="4.500" fill="#c43c34"/><circle cx="78.500" cy="14.500" r="3" fill="#e89890" opacity=".5"/>
<path d="M76.300 12.300 l4.400 4.400 m0 -4.400 l-4.400 4.400" stroke="#fff" stroke-width="1.500"/></svg>
<div class="hmt" style="left:1514px;top:864px;width:60px;text-align:center">21:35</div>
<div class="hmt" style="left:1514px;top:880px;width:60px;text-align:center">04.12.2016</div>
<svg class="a" style="left:1580px;top:873px" width="16" height="13" viewBox="0 0 16 13"><rect x=".5" y=".5" width="15" height="12" fill="#2c6cd4" stroke="#8cb4ec"/><path d="M1 9 L15 2 V9z" fill="#4c8ce4"/><rect x="1" y="9.500" width="14" height="2.500" fill="#1c2434"/><rect x="2" y="10" width="2" height="1.500" fill="#e0c040"/></svg>
</body></html>
